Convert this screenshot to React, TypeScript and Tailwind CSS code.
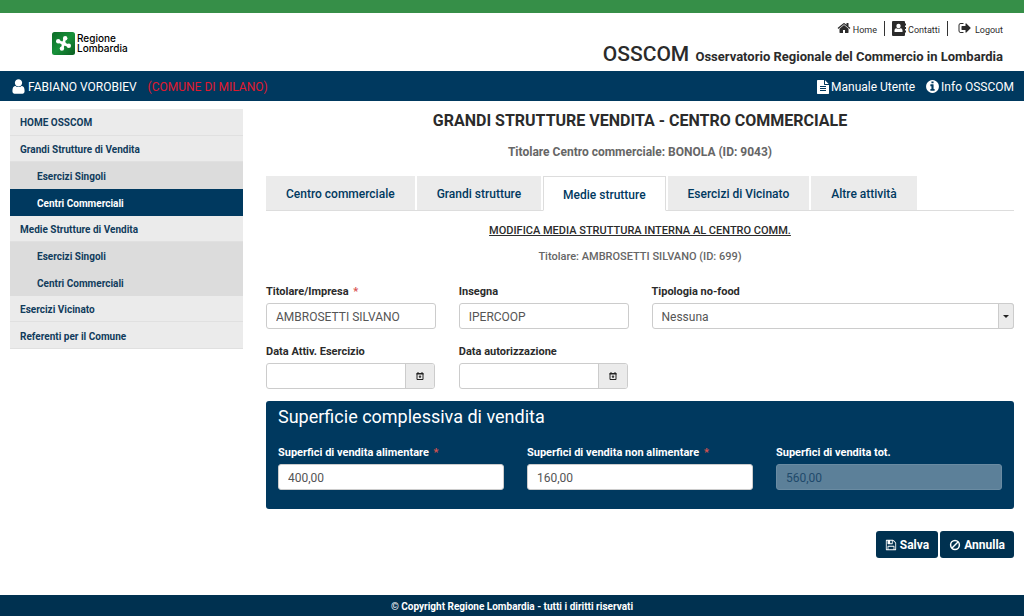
import type { ReactNode } from "react";

const ICONS = {
  home: "M1472 992v480q0 26-19 45t-45 19h-384v-384h-256v384h-384q-26 0-45-19t-19-45v-480q0-1 .5-3t.5-3l575-474 575 474q1 2 1 6zm223-69l-62 74q-8 9-21 11h-3q-13 0-21-7l-692-577-692 577q-12 8-24 7-13-2-21-11l-62-74q-8-10-7-23.5t11-21.5l719-599q32-26 76-26t76 26l244 204v-195q0-14 9-23t23-9h192q14 0 23 9t9 23v408l219 182q10 8 11 21.5t-7 23.5z",
  logout:
    "M704 1440q0 4 1 20t.5 26.5-3 23.5-10 19.5-20.5 6.5h-320q-119 0-203.5-84.5t-84.5-203.5v-704q0-119 84.5-203.5t203.5-84.5h320q13 0 22.5 9.5t9.5 22.5q0 4 1 20t.5 26.5-3 23.5-10 19.5-20.5 6.5h-320q-66 0-113 47t-47 113v704q0 66 47 113t113 47h312l11.5 1 11.5 3 8 5.5 7 9 2 13.5zm928-544q0 26-19 45l-544 544q-19 19-45 19t-45-19-19-45v-288h-448q-26 0-45-19t-19-45v-384q0-26 19-45t45-19h448v-288q0-26 19-45t45-19 45 19l544 544q19 19 19 45z",
  user: "M1536 1399q0 109-62.5 187t-150.5 78h-854q-88 0-150.5-78t-62.5-187q0-85 8.5-160.5t31.5-152 58.5-131 94-89 134.5-34.5q131 128 313 128t313-128q76 0 134.5 34.5t94 89 58.5 131 31.5 152 8.5 160.5zm-256-887q0 159-112.5 271.5t-271.5 112.5-271.5-112.5-112.5-271.5 112.5-271.5 271.5-112.5 271.5 112.5 112.5 271.5z",
  file: "M1596 476q14 14 28 36h-472v-472q22 14 36 28zm-476 164h544v1056q0 40-28 68t-68 28h-1344q-40 0-68-28t-28-68v-1600q0-40 28-68t68-28h800v544q0 40 28 68t68 28zm160 736v-64q0-14-9-23t-23-9h-704q-14 0-23 9t-9 23v64q0 14 9 23t23 9h704q14 0 23-9t9-23zm0-256v-64q0-14-9-23t-23-9h-704q-14 0-23 9t-9 23v64q0 14 9 23t23 9h704q14 0 23-9t9-23zm0-256v-64q0-14-9-23t-23-9h-704q-14 0-23 9t-9 23v64q0 14 9 23t23 9h704q14 0 23-9t9-23z",
  info: "M1152 1376v-160q0-14-9-23t-23-9h-96v-512q0-14-9-23t-23-9h-320q-14 0-23 9t-9 23v160q0 14 9 23t23 9h96v320h-96q-14 0-23 9t-9 23v160q0 14 9 23t23 9h448q14 0 23-9t9-23zm-128-896v-160q0-14-9-23t-23-9h-192q-14 0-23 9t-9 23v160q0 14 9 23t23 9h192q14 0 23-9t9-23zm640 416q0 209-103 385.5t-279.5 279.5-385.5 103-385.5-103-279.5-279.5-103-385.5 103-385.5 279.5-279.5 385.5-103 385.5 103 279.5 279.5 103 385.5z",
  save: "M512 1536h768v-384h-768v384zm896 0h128v-896q0-14-10-38.5t-20-34.5l-281-281q-10-10-34-20t-39-10v416q0 40-28 68t-68 28h-576q-40 0-68-28t-28-68v-416h-128v1280h128v-416q0-40 28-68t68-28h832q40 0 68 28t28 68v416zm-384-928v-320q0-13-9.5-22.5t-22.5-9.5h-192q-13 0-22.5 9.5t-9.5 22.5v320q0 13 9.5 22.5t22.5 9.5h192q13 0 22.5-9.5t9.5-22.5zm640 32v928q0 40-28 68t-68 28h-1344q-40 0-68-28t-28-68v-1344q0-40 28-68t68-28h928q40 0 88 20t76 48l280 280q28 28 48 76t20 88z",
};

function Icon({ name, className }: { name: keyof typeof ICONS; className: string }) {
  return (
    <svg viewBox="0 0 1792 1792" fill="currentColor" aria-hidden="true" className={className}>
      <path d={ICONS[name]} />
    </svg>
  );
}

function ContactIcon() {
  return (
    <svg viewBox="0 0 14 15" aria-hidden="true" className="h-[15px] w-[14px] self-start">
      <path
        fill="currentColor"
        d="M1 0h11q1 0 1 1v1.500h1v2h-1v1.500h1v2h-1v1.500h1v2h-1v2.500q0 1-1 1H1q-1 0-1-1V1q0-1 1-1z"
      />
      <circle cx="6.500" cy="5" r="2.200" fill="#fff" />
      <path fill="#fff" d="M2.500 11V9.300q0-2 2-2 2 1 4 0 2 0 2 2V11z" />
    </svg>
  );
}

function CalendarIcon() {
  return (
    <svg viewBox="0 0 8 8" aria-hidden="true" className="h-2 w-2">
      <path fill="none" stroke="#222" d="M1 1.500h6v6H1z" />
      <path fill="#222" d="M.5 1h7v1.500h-7zM1.500 0h1v1h-1zM5.500 0h1v1h-1zM3.300 3.500h1.400v1h.8L4 6.200 2.500 4.500h.8z" />
    </svg>
  );
}

function BanIcon() {
  return (
    <svg viewBox="0 0 12 12" fill="none" stroke="currentColor" aria-hidden="true" className="h-3 w-3">
      <circle cx="6" cy="6" r="4.400" strokeWidth="1.500" />
      <path strokeWidth="1.500" d="M9 3L3 9" />
    </svg>
  );
}

function Logo() {
  return (
    <a href="#" className="flex items-center gap-[2px] pt-[2px] text-black">
      <svg viewBox="0 0 23 23" aria-hidden="true" className="h-[23px] w-[23px]">
        <defs>
          <linearGradient id="logo-green" x1="0" y1="0" x2="1" y2="1">
            <stop offset="0" stopColor="#0d6b27" />
            <stop offset="0.5" stopColor="#17913a" />
            <stop offset="1" stopColor="#0b5c20" />
          </linearGradient>
        </defs>
        <rect width="23" height="23" rx="2.500" fill="url(#logo-green)" />
        {/* rosa camuna */}
        <g stroke="#fff" strokeLinecap="round" strokeWidth="2.600">
          <path d="M12.800 6.300L10.200 16.500M6.200 9.300L16.500 13.800" />
        </g>
        <g fill="#fff">
          <circle cx="13.200" cy="6.300" r="2.200" />
          <circle cx="16.800" cy="13.800" r="2.200" />
          <circle cx="9.900" cy="16.600" r="2.200" />
          <circle cx="6.200" cy="9.200" r="2.200" />
          <circle cx="11.600" cy="11.500" r="2.300" />
        </g>
      </svg>
      <span className="flex flex-col font-[Inter,sans-serif] text-[10px] leading-[10px] font-medium">
        <span>Regione</span>
        <span>Lombardia</span>
      </span>
    </a>
  );
}

const menu = [
  { label: "HOME OSSCOM" },
  { label: "Grandi Strutture di Vendita" },
  { label: "Esercizi Singoli", sub: true },
  { label: "Centri Commerciali", sub: true, active: true },
  { label: "Medie Strutture di Vendita" },
  { label: "Esercizi Singoli", sub: true },
  { label: "Centri Commerciali", sub: true },
  { label: "Esercizi Vicinato" },
  { label: "Referenti per il Comune" },
];

function itemClass(item: { sub?: boolean; active?: boolean }) {
  if (item.active) return "bg-[#00395f] pl-[27px] text-white";
  if (item.sub) return "bg-[#dcdcdc] pl-[27px] text-[#113c5c]";
  return "border-b border-[#e0e0e0] bg-[#ebebeb] pl-[10px] text-[#113c5c]";
}

const tabs = ["Centro commerciale", "Grandi strutture", "Medie strutture", "Esercizi di Vicinato", "Altre attività"];

function Field({
  id,
  label,
  required,
  className = "",
  children,
}: {
  id: string;
  label: string;
  required?: boolean;
  className?: string;
  children: ReactNode;
}) {
  return (
    <div className={className}>
      <label htmlFor={id} className="mb-[3px] block text-[11px] leading-4 font-bold">
        {label}
        {required && <span className="pl-[2px] text-[#d9534f]"> *</span>}
      </label>
      {children}
    </div>
  );
}

const inputClass =
  "block h-[26px] w-full rounded-[3px] border border-[#ccc] bg-white px-[9px] pt-px text-xs text-[#555]";

function DateInput({ id }: { id: string }) {
  return (
    <div className="mr-px flex h-[26px] overflow-hidden rounded-[3px] border border-[#ccc]">
      <input id={id} type="text" className="min-w-0 flex-1 px-[9px] text-xs text-[#555]" />
      <button
        type="button"
        aria-label="Apri calendario"
        className="flex w-[29px] items-center justify-center border-l border-[#ccc] bg-[#ebebeb]"
      >
        <CalendarIcon />
      </button>
    </div>
  );
}

export default function App() {
  return (
    <div className="flex min-h-screen flex-col bg-white font-[Roboto,sans-serif] text-[#2b2b2b]">
      <header>
        <div className="h-[13px] bg-[#368f48]" />
        <div className="flex h-[58px] justify-between pr-[21px] pl-[52px]">
          <Logo />
          <div className="flex flex-col items-end pt-2">
            <nav className="flex h-4 text-[9px] leading-[11px]">
              <a href="#" className="flex items-end gap-[2px] border-r border-[#333] pr-[7px]">
                <Icon name="home" className="h-[14px] w-[14px] self-start" />
                <span>Home</span>
              </a>
              <a href="#" className="flex items-end gap-[2px] border-r border-[#333] px-[7px]">
                <ContactIcon />
                <span>Contatti</span>
              </a>
              <a href="#" className="flex items-end gap-[3px] pl-[10px]">
                <Icon name="logout" className="h-[14px] w-[14px] self-start" />
                <span>Logout</span>
              </a>
            </nav>
            <p className="mt-1 text-[13px] leading-7 font-bold">
              <span className="mr-[3px] text-[21px] font-medium">OSSCOM</span> Osservatorio Regionale del Commercio in
              Lombardia
            </p>
          </div>
        </div>
        <div className="flex h-[30px] items-center justify-between bg-[#00395f] px-[10px] pt-px text-xs text-white">
          <p className="flex items-center">
            <Icon name="user" className="mr-px h-[17px] w-[17px]" />
            FABIANO VOROBIEV
            <span className="ml-[11px] text-[#e0182d]">(COMUNE DI MILANO)</span>
          </p>
          <div className="flex gap-[10px]">
            <a href="#" className="flex items-center gap-px">
              <Icon name="file" className="h-[14px] w-[14px]" />
              Manuale Utente
            </a>
            <a href="#" className="flex items-center gap-px">
              <Icon name="info" className="h-[15px] w-[15px]" />
              Info OSSCOM
            </a>
          </div>
        </div>
      </header>

      <div className="flex flex-1 items-start gap-[23px] px-[10px] pt-2 pb-9">
        <nav className="w-[233px] shrink-0">
          <ul className="grid h-60 grid-rows-9 text-[10px] font-bold">
            {menu.map((item, i) => (
              <li key={i} className="grid">
                <a href="#" className={`flex items-center pt-[2px] ${itemClass(item)}`}>
                  {item.label}
                </a>
              </li>
            ))}
          </ul>
        </nav>

        <main className="min-w-0 flex-1">
          <h1 className="text-center text-base leading-6 font-bold">
            GRANDI STRUTTURE VENDITA - CENTRO COMMERCIALE
          </h1>
          <h2 className="mt-[9px] text-center text-xs leading-5 font-bold text-[#666]">
            Titolare Centro commerciale: BONOLA (ID: 9043)
          </h2>

          <div role="tablist" className="mt-[14px] flex gap-[2px] border-b border-[#ddd]">
            {tabs.map((tab) => (
              <button
                key={tab}
                type="button"
                role="tab"
                aria-selected={tab === "Medie strutture"}
                className={`border px-[19px] pt-[2px] text-xs font-medium text-[#00395f] ${
                  tab === "Medie strutture"
                    ? "-mb-px h-[35px] border-[#ddd] border-b-white bg-white"
                    : "h-[34px] border-[#ebebeb] bg-[#ebebeb]"
                }`}
              >
                {tab}
              </button>
            ))}
          </div>

          <h3 className="mt-3 text-center text-[11px] leading-4 font-medium underline">
            MODIFICA MEDIA STRUTTURA INTERNA AL CENTRO COMM.
          </h3>
          <p className="mt-[10px] text-center text-[11px] leading-4 font-medium text-[#666]">
            Titolare: AMBROSETTI SILVANO (ID: 699)
          </p>

          <form onSubmit={(e) => e.preventDefault()}>
            <div className="mt-[19px] grid grid-cols-4 gap-x-[23px] gap-y-[15px]">
              <Field id="titolare" label="Titolare/Impresa" required>
                <input id="titolare" type="text" defaultValue="AMBROSETTI SILVANO" className={inputClass} />
              </Field>
              <Field id="insegna" label="Insegna">
                <input id="insegna" type="text" defaultValue="IPERCOOP" className={inputClass} />
              </Field>
              <Field id="tipologia" label="Tipologia no-food" className="col-span-2">
                <div className="relative">
                  <select id="tipologia" className={`${inputClass} appearance-none`}>
                    <option>Nessuna</option>
                  </select>
                  <span className="pointer-events-none absolute inset-y-0 right-0 flex w-4 items-center justify-center rounded-r-[3px] border border-[#ccc] bg-[#ebebeb]">
                    <svg viewBox="0 0 6 3" aria-hidden="true" className="h-[3px] w-[6px]">
                      <path fill="#222" d="M0 0h6L3 3z" />
                    </svg>
                  </span>
                </div>
              </Field>
              <Field id="data-attiv" label="Data Attiv. Esercizio">
                <DateInput id="data-attiv" />
              </Field>
              <Field id="data-aut" label="Data autorizzazione">
                <DateInput id="data-aut" />
              </Field>
            </div>

            <section className="mt-3 rounded-[3px] bg-[#00395f] px-3 pt-1 pb-[19px] text-white">
              <h4 className="text-lg leading-6">Superficie complessiva di vendita</h4>
              <div className="mt-4 grid grid-cols-3 gap-x-[23px]">
                <Field id="sup-alim" label="Superfici di vendita alimentare" required>
                  <input id="sup-alim" type="text" defaultValue="400,00" className={inputClass} />
                </Field>
                <Field id="sup-non-alim" label="Superfici di vendita non alimentare" required>
                  <input id="sup-non-alim" type="text" defaultValue="160,00" className={inputClass} />
                </Field>
                <Field id="sup-tot" label="Superfici di vendita tot.">
                  <input
                    id="sup-tot"
                    type="text"
                    defaultValue="560,00"
                    disabled
                    className="block h-[26px] w-full rounded-[3px] border border-[#6a8ba2] bg-[#5c8099] px-[9px] pt-px text-xs text-[#1f4a6b]"
                  />
                </Field>
              </div>
            </section>

            <div className="mt-[22px] flex justify-end gap-[2px] text-xs font-bold text-white">
              <button type="submit" className="flex h-[27px] items-center gap-[3px] rounded-[3px] bg-[#003150] px-[9px]">
                <Icon name="save" className="h-3 w-3" />
                Salva
              </button>
              <button type="button" className="flex h-[27px] items-center gap-[3px] rounded-[3px] bg-[#003150] px-[9px]">
                <BanIcon />
                Annulla
              </button>
            </div>
          </form>
        </main>
      </div>

      <footer className="h-[21px] bg-[#003150] text-center text-[10px] leading-6 font-bold text-white">
        © Copyright Regione Lombardia - tutti i diritti riservati
      </footer>
    </div>
  );
}
